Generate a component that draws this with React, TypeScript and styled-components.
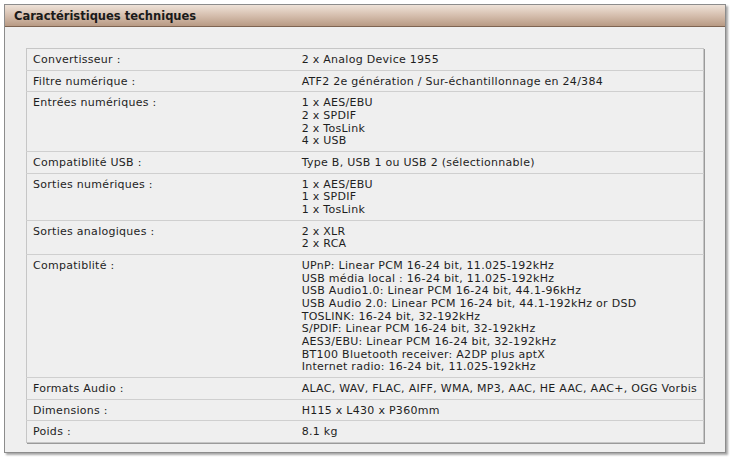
import React from "react";
import styled, { createGlobalStyle } from "styled-components";

const Global = createGlobalStyle`
  html, body { margin: 0; padding: 0; background: #ffffff; }
  #root { padding: 4px; width: 722px; }
`;

const Panel = styled.section`
  width: 720px;
  border: 1px solid #8c8c8c;
  background: #efefef;
  box-shadow: 2px 2px 2px rgba(0, 0, 0, 0.35);
  font-family: "DejaVu Sans", Verdana, sans-serif;
`;

const Header = styled.header`
  height: 21px;
  display: flex;
  align-items: center;
  padding-left: 9px;
  background: linear-gradient(to bottom, #eee2d8 0%, #d8c2b2 45%, #b89a84 100%);
  border-bottom: 1px solid #7e6452;
`;

const Title = styled.h2`
  margin: 0;
  font-size: 11.5px;
  font-weight: bold;
  color: #1a1a1a;
`;

const Body = styled.div`
  padding: 21px 19px 9px 21px;
`;

const SpecTable = styled.table`
  width: 678px;
  border-collapse: collapse;
  background: #efefef;
  border: 1px solid #c6c6c6;
  box-shadow: 1px 1px 0 #9a9a9a;
  font-size: 11px;
  letter-spacing: 0.28px;
  line-height: 12.67px;
  color: #1e1e1e;
`;

const Row = styled.tr`
  border-top: 1px solid #cfcfcf;
  &:first-child { border-top: none; }
`;

const Label = styled.td`
  width: 256px;
  padding: 5px 6px 3px 6px;
  vertical-align: top;
`;

const Value = styled.td`
  padding: 5px 6px 3px 7px;
  vertical-align: top;
`;

const Line = styled.div`
  white-space: nowrap;
`;

const specs: [string, string[]][] = [
  ["Convertisseur :", ["2 x Analog Device 1955"]],
  ["Filtre numérique :", ["ATF2 2e génération / Sur-échantillonnage en 24/384"]],
  ["Entrées numériques :", ["1 x AES/EBU", "2 x SPDIF", "2 x TosLink", "4 x USB"]],
  ["Compatiblité USB :", ["Type B, USB 1 ou USB 2 (sélectionnable)"]],
  ["Sorties numériques :", ["1 x AES/EBU", "1 x SPDIF", "1 x TosLink"]],
  ["Sorties analogiques :", ["2 x XLR", "2 x RCA"]],
  [
    "Compatiblité :",
    [
      "UPnP: Linear PCM 16-24 bit, 11.025-192kHz",
      "USB média local : 16-24 bit, 11.025-192kHz",
      "USB Audio1.0: Linear PCM 16-24 bit, 44.1-96kHz",
      "USB Audio 2.0: Linear PCM 16-24 bit, 44.1-192kHz or DSD",
      "TOSLINK: 16-24 bit, 32-192kHz",
      "S/PDIF: Linear PCM 16-24 bit, 32-192kHz",
      "AES3/EBU: Linear PCM 16-24 bit, 32-192kHz",
      "BT100 Bluetooth receiver: A2DP plus aptX",
      "Internet radio: 16-24 bit, 11.025-192kHz",
    ],
  ],
  ["Formats Audio :", ["ALAC, WAV, FLAC, AIFF, WMA, MP3, AAC, HE AAC, AAC+, OGG Vorbis"]],
  ["Dimensions :", ["H115 x L430 x P360mm"]],
  ["Poids :", ["8.1 kg"]],
];

export default function App() {
  return (
    <>
      <Global />
      <Panel>
        <Header>
          <Title>Caractéristiques techniques</Title>
        </Header>
        <Body>
          <SpecTable>
            <tbody>
              {specs.map(([label, values]) => (
                <Row key={label}>
                  <Label>{label}</Label>
                  <Value>
                    {values.map((v) => (
                      <Line key={v}>{v}</Line>
                    ))}
                  </Value>
                </Row>
              ))}
            </tbody>
          </SpecTable>
        </Body>
      </Panel>
    </>
  );
}
